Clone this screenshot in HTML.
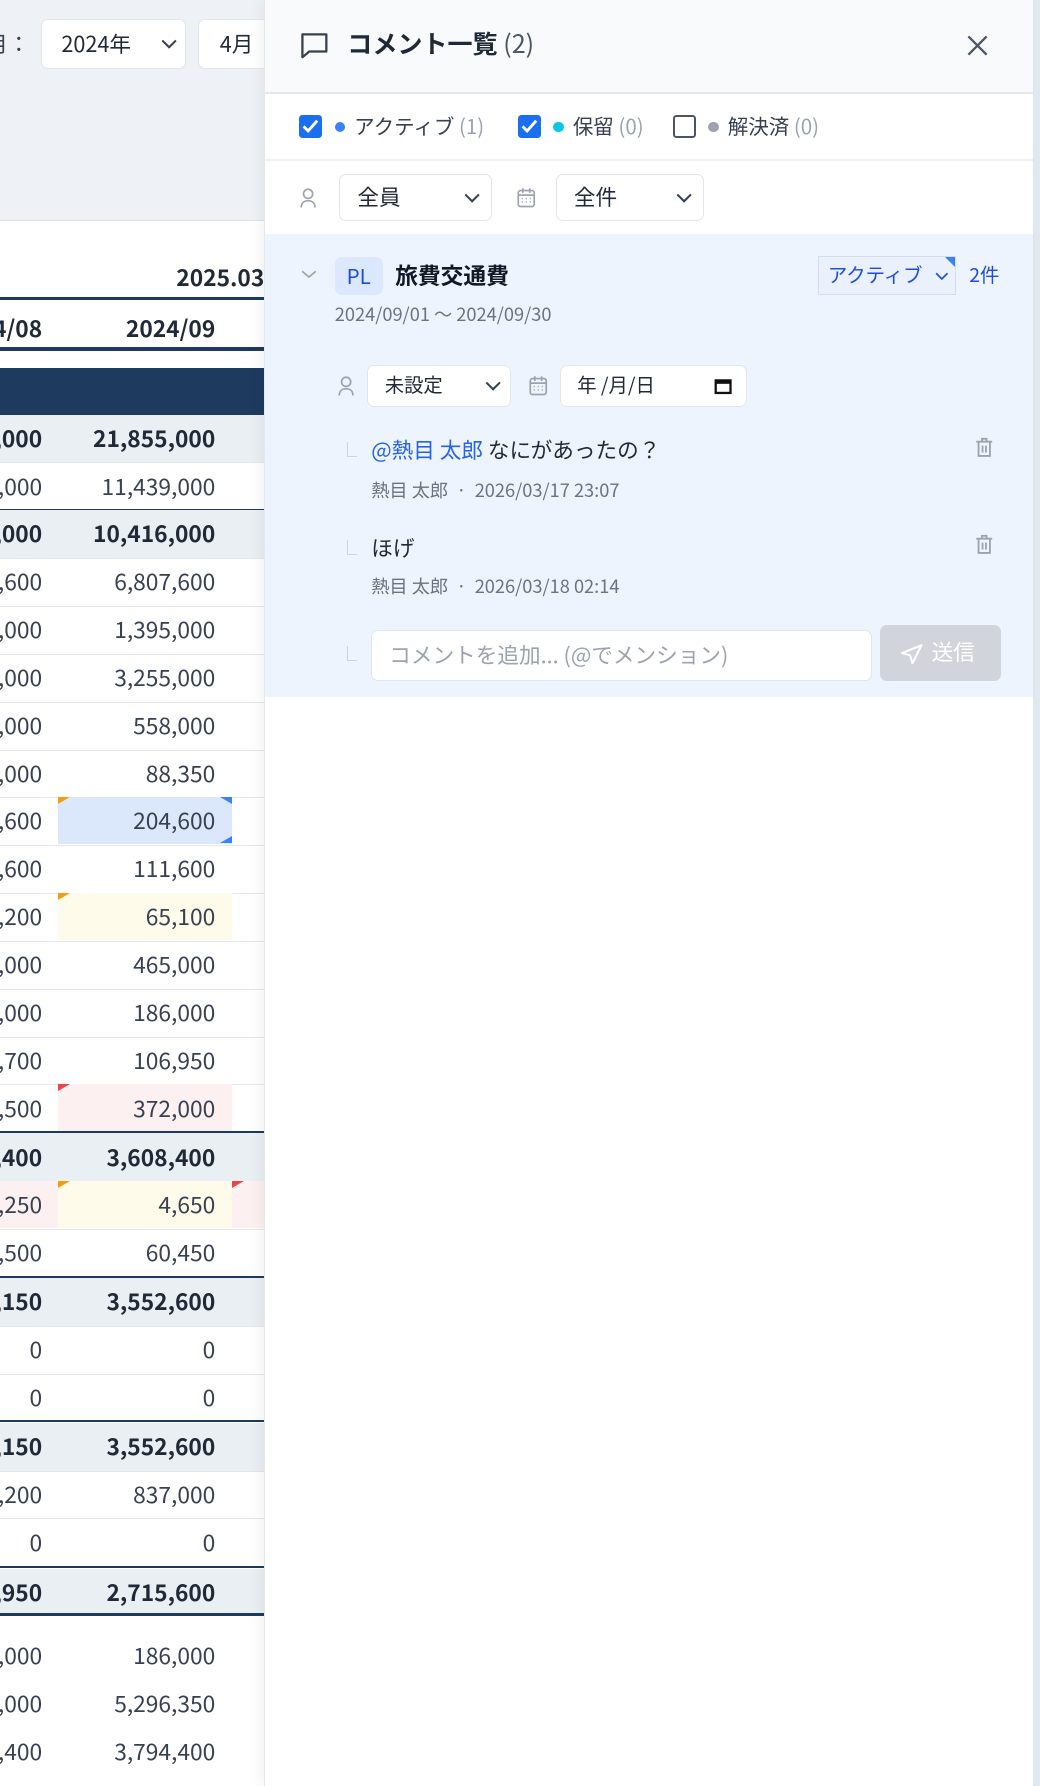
<!DOCTYPE html>
<html><head><meta charset="utf-8"><style>
html,body{margin:0;padding:0;width:1040px;height:1786px;overflow:hidden;background:#fff}
#w{zoom:1.13911;width:913px;height:1568px;position:relative;font-family:"Noto Sans CJK JP","Liberation Sans",sans-serif;color:#1f2937;overflow:hidden;line-height:1.2}
.a{position:absolute}
.top{left:0;top:0;width:232px;height:193px;background:#eef2f6}
.sel{background:#fff;border:1px solid #e2e6ea;border-radius:6px;box-sizing:border-box}
.row{position:absolute;left:0;width:232px;height:42px;border-bottom:1px solid #e3e8ee;font-size:20px;color:#374151}
.row span{position:absolute;top:8px}
.l{right:195px}.r{right:43px}
.b{background:#eaeff4;font-weight:bold;color:#1f2937}
.tk{border-bottom:2px solid #1e3a5f}
.cell{position:absolute;left:51px;width:153px;top:0;height:41px}
.tri{position:absolute;width:0;height:0}
.panel{left:232px;top:0;width:674px;height:1568px;background:#fff;border-left:1px solid #e5e7eb;box-shadow:-4px 0 10px rgba(0,0,0,.05)}
.chk{position:absolute;width:20px;height:20px;border-radius:3px;box-sizing:border-box}
.on{background:#1a6ef0}
.off{border:2px solid #4b5563;background:#fff}
.dot{position:absolute;width:9px;height:9px;border-radius:50%}
.g{color:#9ca3af}
</style></head><body><div id="w">
<div class="a top"></div>
<div class="a" style="left:-12px;top:27px;font-size:19px;color:#374151">月：</div>
<div class="a sel" style="left:36px;top:17px;width:127px;height:44px"><span class="a" style="left:17px;top:9px;font-size:19px">2024年</span><svg class="a" style="left:104px;top:15px" width="16" height="12"><path d="M2 3l6 6 6-6" stroke="#374151" stroke-width="1.8" fill="none"/></svg></div>
<div class="a sel" style="left:174px;top:17px;width:80px;height:44px"><span class="a" style="left:18px;top:9px;font-size:19px">4月</span></div>
<div class="a" style="left:0;top:193px;width:232px;height:1px;background:#dde3ea"></div>
<div class="a" style="right:681px;top:231px;font-size:20px;font-weight:bold">2025.03</div>
<div class="a" style="left:0;top:261px;width:232px;height:2px;background:#1e3a5f"></div>
<div class="a" style="right:876px;top:276px;font-size:20px;font-weight:bold">4/08</div>
<div class="a" style="right:724px;top:276px;font-size:20px;font-weight:bold">2024/09</div>
<div class="a" style="left:0;top:305px;width:232px;height:3px;background:#1e3a5f"></div>
<div class="a" style="left:0;top:323px;width:232px;height:41px;background:#1e3a5f"></div>

<div class="row b" style="top:364px"><span class="l">,000</span><span class="r">21,855,000</span></div>
<div class="row tk" style="top:406px;height:41px"><span class="l">,000</span><span class="r">11,439,000</span></div>
<div class="row b" style="top:448px"><span class="l">,000</span><span class="r">10,416,000</span></div>
<div class="row" style="top:490px"><span class="l">,600</span><span class="r">6,807,600</span></div>
<div class="row" style="top:532px"><span class="l">,000</span><span class="r">1,395,000</span></div>
<div class="row" style="top:574px"><span class="l">,000</span><span class="r">3,255,000</span></div>
<div class="row" style="top:616px"><span class="l">,000</span><span class="r">558,000</span></div>
<div class="row" style="top:658px"><span class="l">,000</span><span class="r">88,350</span></div>
<div class="row" style="top:700px"><div class="cell" style="background:#dbe8fb"></div><div class="tri" style="left:51px;top:0;border-top:7px solid #f59e0b;border-right:11px solid transparent"></div><div class="tri" style="left:193px;top:0;border-top:7px solid #3b82f6;border-left:11px solid transparent"></div><div class="tri" style="left:193px;top:34px;border-bottom:7px solid #3b82f6;border-left:11px solid transparent"></div><span class="l">,600</span><span class="r">204,600</span></div>
<div class="row" style="top:742px"><span class="l">,600</span><span class="r">111,600</span></div>
<div class="row" style="top:784px"><div class="cell" style="background:#fefbea"></div><div class="tri" style="left:51px;top:0;border-top:7px solid #f59e0b;border-right:11px solid transparent"></div><span class="l">,200</span><span class="r">65,100</span></div>
<div class="row" style="top:826px"><span class="l">,000</span><span class="r">465,000</span></div>
<div class="row" style="top:868px"><span class="l">,000</span><span class="r">186,000</span></div>
<div class="row" style="top:910px"><span class="l">,700</span><span class="r">106,950</span></div>
<div class="row tk" style="top:952px;height:41px"><div class="cell" style="background:#fdf0f0"></div><div class="tri" style="left:51px;top:0;border-top:7px solid #ef4444;border-right:11px solid transparent"></div><span class="l">,500</span><span class="r">372,000</span></div>
<div class="row b" style="top:995px"><span class="l">,400</span><span class="r">3,608,400</span></div>
<div class="row" style="top:1037px"><div class="cell" style="left:0;width:51px;background:#fdf0f0"></div><div class="cell" style="background:#fefbea"></div><div class="cell" style="left:204px;width:28px;background:#fdf0f0"></div><div class="tri" style="left:51px;top:0;border-top:7px solid #f59e0b;border-right:11px solid transparent"></div><div class="tri" style="left:204px;top:0;border-top:7px solid #ef4444;border-right:11px solid transparent"></div><span class="l">,250</span><span class="r">4,650</span></div>
<div class="row tk" style="top:1079px;height:41px"><span class="l">,500</span><span class="r">60,450</span></div>
<div class="row b" style="top:1122px"><span class="l">,150</span><span class="r">3,552,600</span></div>
<div class="row" style="top:1164px"><span class="l">0</span><span class="r">0</span></div>
<div class="row tk" style="top:1206px;height:41px"><span class="l">0</span><span class="r">0</span></div>
<div class="row b" style="top:1249px"><span class="l">,150</span><span class="r">3,552,600</span></div>
<div class="row" style="top:1291px"><span class="l">,200</span><span class="r">837,000</span></div>
<div class="row tk" style="top:1333px;height:42px"><span class="l">0</span><span class="r">0</span></div>
<div class="row b" style="top:1377px;height:39px;border-bottom:3px solid #1e3a5f"><span class="l">,950</span><span class="r">2,715,600</span></div>
<div class="row" style="top:1433px;border:0"><span class="l">,000</span><span class="r">186,000</span></div>
<div class="row" style="top:1475px;border:0"><span class="l">,000</span><span class="r">5,296,350</span></div>
<div class="row" style="top:1517px;border:0"><span class="l">,400</span><span class="r">3,794,400</span></div>

<div class="a" style="left:906px;top:0;width:7px;height:1568px;background:#e2e8f0"></div>
<div class="a panel">
 <div class="a" style="left:0;top:0;width:674px;height:81px;background:#f8fafc;border-bottom:2px solid #e5e7eb"></div>
 <svg class="a" style="left:30px;top:27px" width="28" height="26"><path d="M3 3h21v15H9l-6 5z" stroke="#374151" stroke-width="2" fill="none" stroke-linejoin="round"/></svg>
 <div class="a" style="left:72px;top:25px;font-size:22px;font-weight:bold;color:#1f2937">コメント一覧 <span style="font-weight:normal;color:#4b5563">(2)</span></div>
 <svg class="a" style="left:614px;top:29px" width="22" height="22"><path d="M3 3l16 16M19 3L3 19" stroke="#4b5563" stroke-width="2"/></svg>

 <div class="a" style="left:0;top:140px;width:674px;height:1px;background:#eef0f3"></div>
 <div class="chk on" style="left:30px;top:101px"><svg width="20" height="20"><path d="M4 10l4 4 8-9" stroke="#fff" stroke-width="2.5" fill="none"/></svg></div>
 <div class="dot" style="left:61px;top:107px;background:#3b82f6"></div>
 <div class="a" style="left:78px;top:99px;font-size:18px;color:#374151">アクティブ <span class="g">(1)</span></div>
 <div class="chk on" style="left:222px;top:101px"><svg width="20" height="20"><path d="M4 10l4 4 8-9" stroke="#fff" stroke-width="2.5" fill="none"/></svg></div>
 <div class="dot" style="left:253px;top:107px;background:#06c8e0"></div>
 <div class="a" style="left:270px;top:99px;font-size:18px;color:#374151">保留 <span class="g">(0)</span></div>
 <div class="chk off" style="left:358px;top:101px"></div>
 <div class="dot" style="left:389px;top:107px;background:#9ca3af"></div>
 <div class="a" style="left:406px;top:99px;font-size:18px;color:#374151">解決済 <span class="g">(0)</span></div>

 <svg class="a" style="left:30px;top:164px" width="16" height="20"><circle cx="8" cy="6" r="4" stroke="#9ca3af" stroke-width="1.5" fill="none"/><path d="M2 18c0-4 2.5-6 6-6s6 2 6 6" stroke="#9ca3af" stroke-width="1.5" fill="none"/></svg>
 <div class="a sel" style="left:65px;top:153px;width:134px;height:41px"><span class="a" style="left:15px;top:8px;font-size:19px">全員</span><svg class="a" style="left:108px;top:14px" width="16" height="12"><path d="M2 3l6 6 6-6" stroke="#374151" stroke-width="1.8" fill="none"/></svg></div>
 <svg class="a" style="left:220px;top:163px" width="18" height="20"><rect x="2" y="4" width="14" height="14" rx="2" stroke="#9ca3af" stroke-width="1.5" fill="none"/><path d="M2 8h14M6 2v4M12 2v4" stroke="#9ca3af" stroke-width="1.5"/><path d="M5 11h1M8.5 11h1M12 11h1M5 14h1M8.5 14h1M12 14h1" stroke="#9ca3af" stroke-width="1.3"/></svg>
 <div class="a sel" style="left:255px;top:153px;width:130px;height:41px"><span class="a" style="left:15px;top:8px;font-size:19px">全件</span><svg class="a" style="left:104px;top:14px" width="16" height="12"><path d="M2 3l6 6 6-6" stroke="#374151" stroke-width="1.8" fill="none"/></svg></div>

 <div class="a" style="left:0;top:205px;width:674px;height:407px;background:#eef4fe"></div>
 <svg class="a" style="left:31px;top:236px" width="14" height="10"><path d="M1 2l6 5 6-5" stroke="#9ca3af" stroke-width="1.5" fill="none"/></svg>
 <div class="a" style="left:61px;top:226px;width:42px;height:33px;background:#dbe8fd;border-radius:6px;color:#1d4ed8;font-size:18px;text-align:center;line-height:33px">PL</div>
 <div class="a" style="left:114px;top:229px;font-size:20px;font-weight:bold;color:#111827">旅費交通費</div>
 <div class="a" style="left:485px;top:225px;width:121px;height:34px;border:1px solid #d6dde8;background:#eaf1fc;box-sizing:border-box;color:#1d4ed8;font-size:17px"><span class="a" style="left:8px;top:5px">アクティブ</span><svg class="a" style="left:102px;top:12px" width="12" height="9"><path d="M1 2l5 5 5-5" stroke="#1d4ed8" stroke-width="1.5" fill="none"/></svg><div class="tri" style="right:0;top:0;border-top:9px solid #3b82f6;border-left:9px solid transparent"></div></div>
 <div class="a" style="left:618px;top:231px;font-size:17px;color:#1d4ed8">2件</div>
 <div class="a" style="left:61px;top:267px;font-size:16px;color:#6b7280">2024/09/01 〜 2024/09/30</div>

 <svg class="a" style="left:63px;top:329px" width="16" height="20"><circle cx="8" cy="6" r="4" stroke="#9ca3af" stroke-width="1.5" fill="none"/><path d="M2 18c0-4 2.5-6 6-6s6 2 6 6" stroke="#9ca3af" stroke-width="1.5" fill="none"/></svg>
 <div class="a sel" style="left:89px;top:320px;width:127px;height:37px"><span class="a" style="left:15px;top:7px;font-size:17px">未設定</span><svg class="a" style="left:102px;top:12px" width="16" height="12"><path d="M2 3l6 6 6-6" stroke="#374151" stroke-width="1.8" fill="none"/></svg></div>
 <svg class="a" style="left:231px;top:328px" width="18" height="20"><rect x="2" y="4" width="14" height="14" rx="2" stroke="#9ca3af" stroke-width="1.5" fill="none"/><path d="M2 8h14M6 2v4M12 2v4" stroke="#9ca3af" stroke-width="1.5"/><path d="M5 11h1M8.5 11h1M12 11h1M5 14h1M8.5 14h1M12 14h1" stroke="#9ca3af" stroke-width="1.3"/></svg>
 <div class="a sel" style="left:259px;top:320px;width:164px;height:37px"><span class="a" style="left:14px;top:7px;font-size:17px">年 /月/日</span><svg class="a" style="left:134px;top:10px" width="16" height="16"><rect x="1.5" y="3" width="13" height="11" stroke="#111" stroke-width="2" fill="none"/><rect x="1.5" y="3" width="13" height="3" fill="#111"/></svg></div>

 <div class="a" style="left:72px;top:388px;width:8px;height:12px;border-left:1.5px solid #cbd5e1;border-bottom:1.5px solid #cbd5e1"></div>
 <div class="a" style="left:93px;top:384px;font-size:19px;color:#1f2937"><span style="color:#2563eb">@熱目 太郎</span> なにがあったの？</div>
 <div class="a" style="left:93px;top:421px;font-size:16px;color:#6b7280">熱目 太郎 &nbsp;· &nbsp;2026/03/17 23:07</div>
 <svg class="a" style="left:622px;top:383px" width="18" height="20"><path d="M2 5h14M7 5V2.5h4V5M4 5v12.5h10V5M7.5 8.5v6M10.5 8.5v6" stroke="#9ca3af" stroke-width="1.6" fill="none"/></svg>

 <div class="a" style="left:72px;top:474px;width:8px;height:12px;border-left:1.5px solid #cbd5e1;border-bottom:1.5px solid #cbd5e1"></div>
 <div class="a" style="left:93px;top:470px;font-size:19px;color:#1f2937">ほげ</div>
 <div class="a" style="left:93px;top:506px;font-size:16px;color:#6b7280">熱目 太郎 &nbsp;· &nbsp;2026/03/18 02:14</div>
 <svg class="a" style="left:622px;top:468px" width="18" height="20"><path d="M2 5h14M7 5V2.5h4V5M4 5v12.5h10V5M7.5 8.5v6M10.5 8.5v6" stroke="#9ca3af" stroke-width="1.6" fill="none"/></svg>

 <div class="a" style="left:72px;top:567px;width:8px;height:12px;border-left:1.5px solid #cbd5e1;border-bottom:1.5px solid #cbd5e1"></div>
 <div class="a sel" style="left:93px;top:553px;width:440px;height:45px"><span class="a" style="left:15px;top:10px;font-size:19px;color:#9ca3af">コメントを追加... (@でメンション)</span></div>
 <div class="a" style="left:540px;top:549px;width:106px;height:49px;background:#d1d5db;border-radius:6px;color:#fff;font-size:19px"><svg class="a" style="left:18px;top:16px" width="20" height="18"><path d="M18 1L1 8l7 2 2 7z" stroke="#fff" stroke-width="1.8" fill="none" stroke-linejoin="round"/></svg><span class="a" style="left:45px;top:12px">送信</span></div>
</div>
</div></body></html>
